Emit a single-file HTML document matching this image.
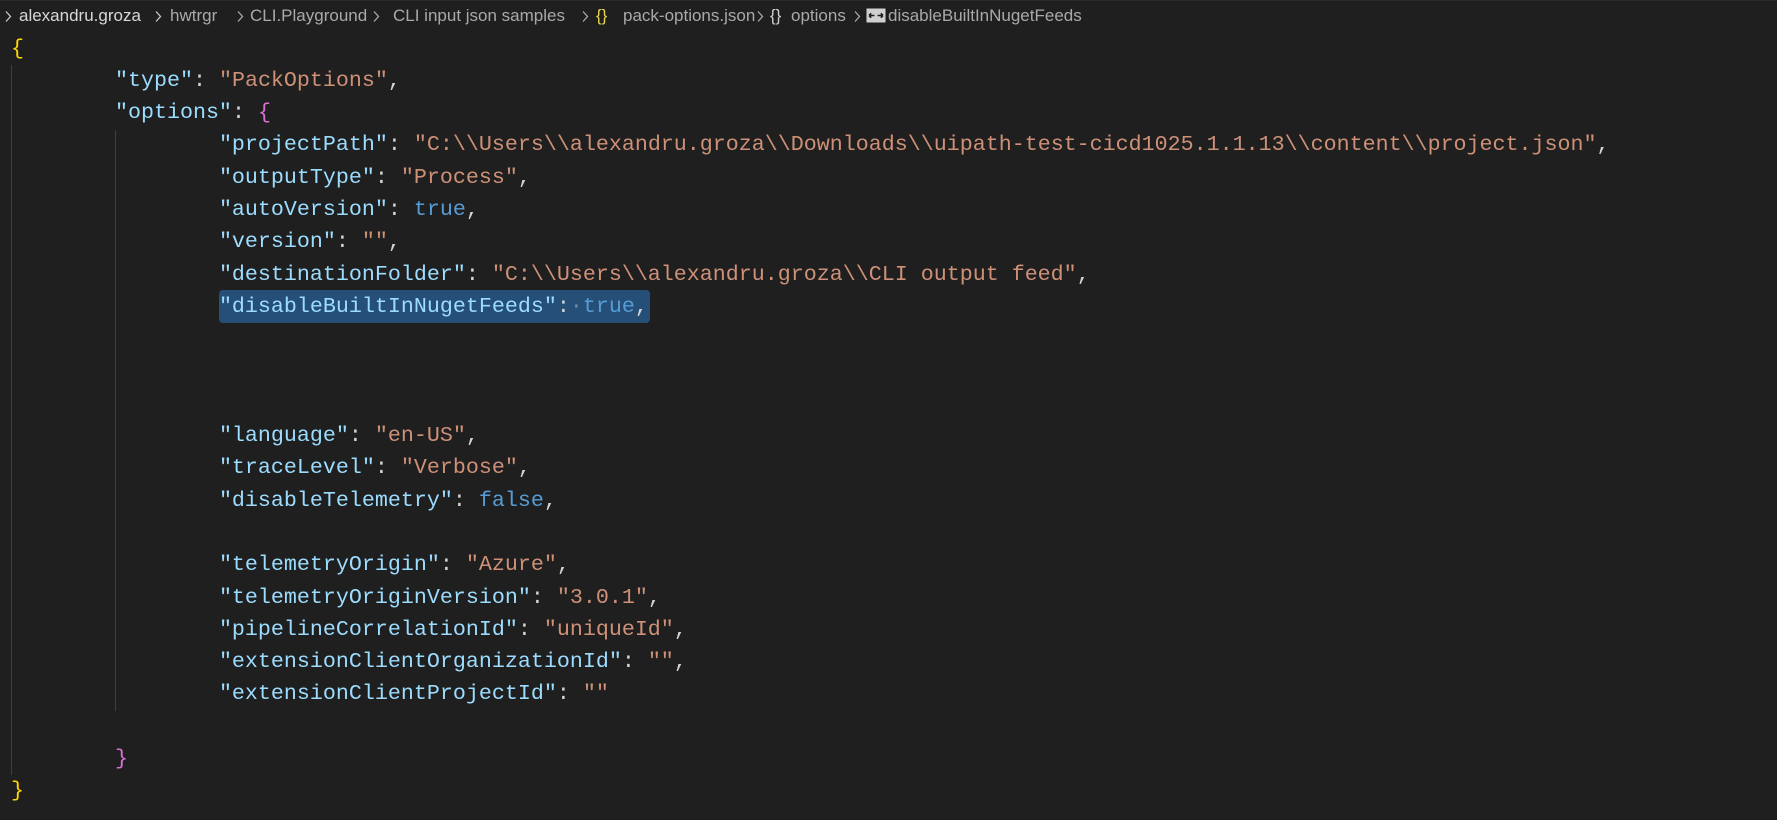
<!DOCTYPE html>
<html><head><meta charset="utf-8"><style>
html,body{margin:0;padding:0;background:#1f1f1f;width:1777px;height:820px;overflow:hidden;position:relative}
.bc{position:absolute;top:4px;font-family:"Liberation Sans",sans-serif;font-size:17px;color:#a9a9a9;white-space:nowrap;line-height:24px}
.cv{position:absolute;top:10px}
.ed{position:absolute;left:11px;top:32.5px;font-family:"Liberation Mono",monospace;font-size:21.67px;line-height:32.3px;white-space:pre;color:#d4d4d4}
.k{color:#9cdcfe}.s{color:#ce9178}.b{color:#569cd6}.y{color:#ffd700}.p{color:#da70d6}.d{color:#6a8aa8}
.g{position:absolute;width:1px;background:#404040}
.sel{position:absolute;left:219px;top:290px;width:431px;height:33px;background:#264f78;border-radius:4px}
</style></head><body>
<div style="position:absolute;left:0;top:0;width:1777px;height:1px;background:#2b2b2b"></div>
<svg class="cv" style="left:4px" width="8" height="13" viewBox="0 0 8 13"><path d="M2 1.5l4.5 5-4.5 5" stroke="#c8c8c8" stroke-width="1.3" fill="none"/></svg>
<div class="bc" style="left:19px;color:#d8d8d8">alexandru.groza</div>
<svg class="cv" style="left:154px" width="8" height="13" viewBox="0 0 8 13"><path d="M2 1.5l4.5 5-4.5 5" stroke="#c8c8c8" stroke-width="1.3" fill="none"/></svg>
<div class="bc" style="left:170px">hwtrgr</div>
<svg class="cv" style="left:236px" width="8" height="13" viewBox="0 0 8 13"><path d="M2 1.5l4.5 5-4.5 5" stroke="#a9a9a9" stroke-width="1.3" fill="none"/></svg>
<div class="bc" style="left:250px">CLI.Playground</div>
<svg class="cv" style="left:372px" width="8" height="13" viewBox="0 0 8 13"><path d="M2 1.5l4.5 5-4.5 5" stroke="#a9a9a9" stroke-width="1.3" fill="none"/></svg>
<div class="bc" style="left:393px">CLI input json samples</div>
<svg class="cv" style="left:581px" width="8" height="13" viewBox="0 0 8 13"><path d="M2 1.5l4.5 5-4.5 5" stroke="#a9a9a9" stroke-width="1.3" fill="none"/></svg>
<div class="bc" style="left:596px;color:#e8d44d">{}</div>
<div class="bc" style="left:623px">pack-options.json</div>
<svg class="cv" style="left:756px" width="8" height="13" viewBox="0 0 8 13"><path d="M2 1.5l4.5 5-4.5 5" stroke="#a9a9a9" stroke-width="1.3" fill="none"/></svg>
<div class="bc" style="left:770px;color:#d0d0d0">{}</div>
<div class="bc" style="left:791px">options</div>
<svg class="cv" style="left:853px" width="8" height="13" viewBox="0 0 8 13"><path d="M2 1.5l4.5 5-4.5 5" stroke="#a9a9a9" stroke-width="1.3" fill="none"/></svg>
<svg style="position:absolute;left:866px;top:8px" width="20" height="15" viewBox="0 0 20 15"><rect x="0.5" y="0.5" width="19" height="14" fill="#d0d0d0"/><path d="M3 7.5h5.5M3 7.5l2.2-2.2M3 7.5l2.2 2.2M17 7.5h-5.5M17 7.5l-2.2-2.2M17 7.5l-2.2 2.2" stroke="#1f1f1f" stroke-width="1.6" fill="none"/></svg>
<div class="bc" style="left:888px">disableBuiltInNugetFeeds</div>
<div class="g" style="left:11px;top:65px;height:710px"></div>
<div class="g" style="left:115px;top:130px;height:581px"></div>
<div class="sel"></div>
<div class="ed"><span class="y">{</span>
	<span class="k">"type"</span>: <span class="s">"PackOptions"</span>,
	<span class="k">"options"</span>: <span class="p">{</span>
		<span class="k">"projectPath"</span>: <span class="s">"C:\\Users\\alexandru.groza\\Downloads\\uipath-test-cicd1025.1.1.13\\content\\project.json"</span>,
		<span class="k">"outputType"</span>: <span class="s">"Process"</span>,
		<span class="k">"autoVersion"</span>: <span class="b">true</span>,
		<span class="k">"version"</span>: <span class="s">""</span>,
		<span class="k">"destinationFolder"</span>: <span class="s">"C:\\Users\\alexandru.groza\\CLI output feed"</span>,
		<span class="k">"disableBuiltInNugetFeeds"</span>:<span class="d">·</span><span class="b">true</span>,



		<span class="k">"language"</span>: <span class="s">"en-US"</span>,
		<span class="k">"traceLevel"</span>: <span class="s">"Verbose"</span>,
		<span class="k">"disableTelemetry"</span>: <span class="b">false</span>,

		<span class="k">"telemetryOrigin"</span>: <span class="s">"Azure"</span>,
		<span class="k">"telemetryOriginVersion"</span>: <span class="s">"3.0.1"</span>,
		<span class="k">"pipelineCorrelationId"</span>: <span class="s">"uniqueId"</span>,
		<span class="k">"extensionClientOrganizationId"</span>: <span class="s">""</span>,
		<span class="k">"extensionClientProjectId"</span>: <span class="s">""</span>

	<span class="p">}</span>
<span class="y">}</span></div>
</body></html>
